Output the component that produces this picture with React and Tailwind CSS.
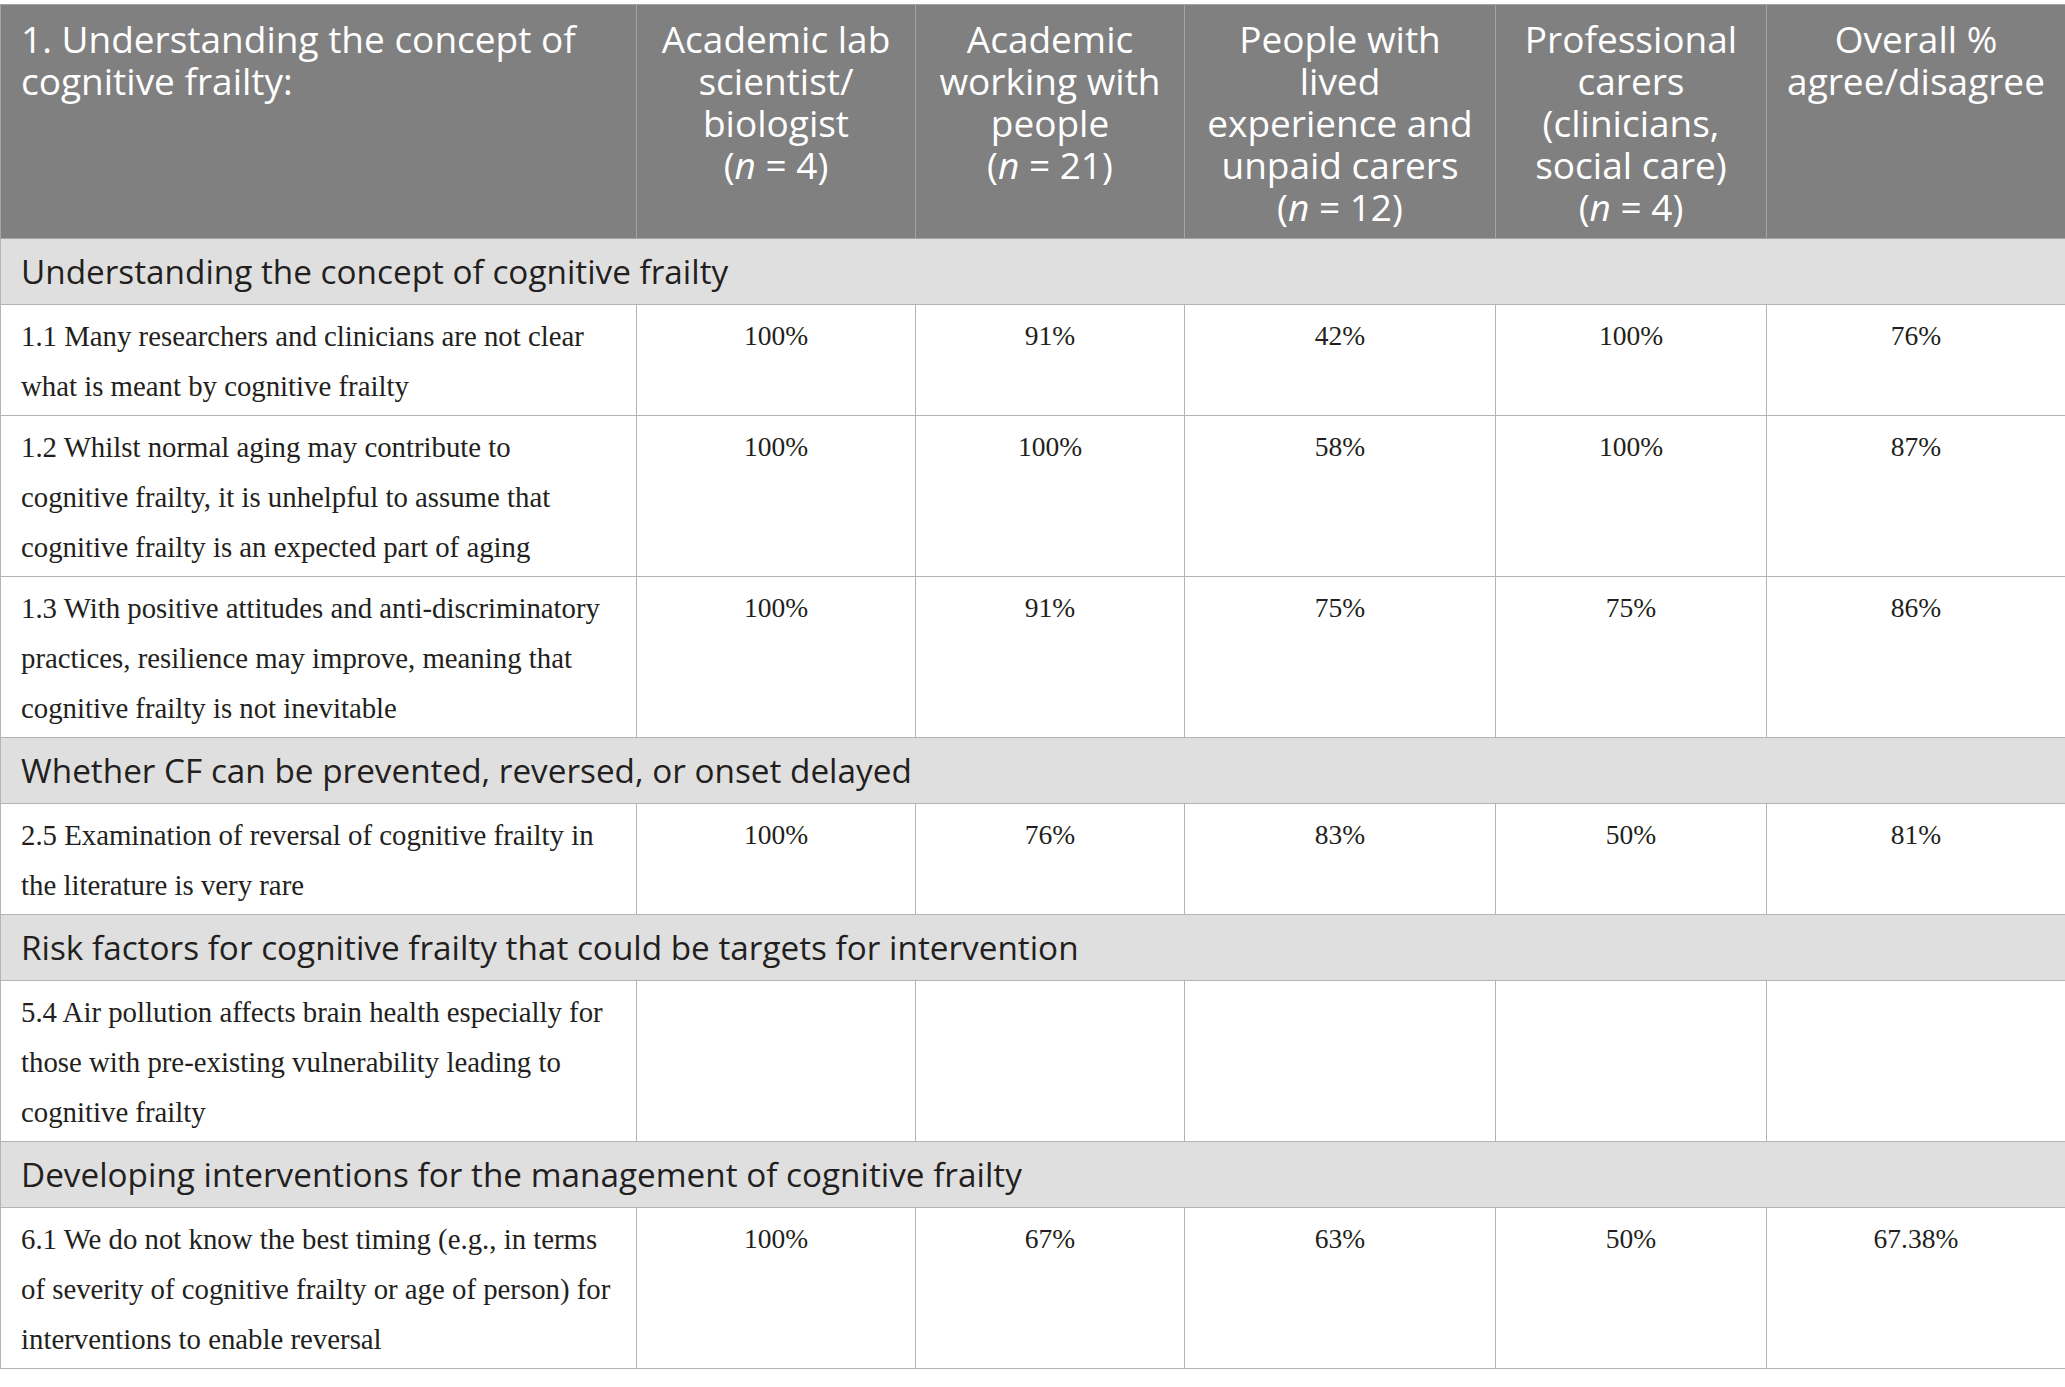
import React from "react";

const groups = [
  {
    title: "Understanding the concept of cognitive frailty",
    rows: [
      {
        text: ["1.1 Many researchers and clinicians are not clear", "what is meant by cognitive frailty"],
        values: ["100%", "91%", "42%", "100%", "76%"],
      },
      {
        text: [
          "1.2 Whilst normal aging may contribute to",
          "cognitive frailty, it is unhelpful to assume that",
          "cognitive frailty is an expected part of aging",
        ],
        values: ["100%", "100%", "58%", "100%", "87%"],
      },
      {
        text: [
          "1.3 With positive attitudes and anti-discriminatory",
          "practices, resilience may improve, meaning that",
          "cognitive frailty is not inevitable",
        ],
        values: ["100%", "91%", "75%", "75%", "86%"],
      },
    ],
  },
  {
    title: "Whether CF can be prevented, reversed, or onset delayed",
    rows: [
      {
        text: ["2.5 Examination of reversal of cognitive frailty in", "the literature is very rare"],
        values: ["100%", "76%", "83%", "50%", "81%"],
      },
    ],
  },
  {
    title: "Risk factors for cognitive frailty that could be targets for intervention",
    rows: [
      {
        text: [
          "5.4 Air pollution affects brain health especially for",
          "those with pre-existing vulnerability leading to",
          "cognitive frailty",
        ],
        values: ["", "", "", "", ""],
      },
    ],
  },
  {
    title: "Developing interventions for the management of cognitive frailty",
    rows: [
      {
        text: [
          "6.1 We do not know the best timing (e.g., in terms",
          "of severity of cognitive frailty or age of person) for",
          "interventions to enable reversal",
        ],
        values: ["100%", "67%", "63%", "50%", "67.38%"],
      },
    ],
  },
];

const headers = [
  ["Academic lab", "scientist/", "biologist", "4"],
  ["Academic", "working with", "people", "21"],
  ["People with", "lived", "experience and", "unpaid carers", "12"],
  ["Professional", "carers", "(clinicians,", "social care)", "4"],
];

const sans = "font-['Open_Sans','Lato',sans-serif]";
const serif = "font-['Liberation_Serif','Times_New_Roman',serif]";

function HeadCell({ lines }) {
  const n = lines[lines.length - 1];
  const words = lines.slice(0, -1);
  return (
    <th className="border border-[#a3a4a3] align-top pt-[13px] pb-[10px] px-1 text-center font-normal whitespace-nowrap">
      {words.map((w, i) => (
        <div key={i}>{w}</div>
      ))}
      <div>
        (<i>n</i> = {n})
      </div>
    </th>
  );
}

export default function App() {
  return (
    <div className="w-[2065px] bg-white pt-[4px]">
      <table className="w-[2065px] table-fixed border-collapse">
        <colgroup>
          <col className="w-[636px]" />
          <col className="w-[279px]" />
          <col className="w-[269px]" />
          <col className="w-[311px]" />
          <col className="w-[271px]" />
          <col className="w-[299px]" />
        </colgroup>
        <thead>
          <tr className={`bg-[#7f807f] text-white text-[37px] leading-[42px] ${sans}`}>
            <th className="border border-[#a3a4a3] align-top pt-[13px] pb-[10px] pl-[20px] pr-2 text-left font-normal whitespace-nowrap">
              <div>1. Understanding the concept of</div>
              <div>cognitive frailty:</div>
            </th>
            {headers.map((h, i) => (
              <HeadCell key={i} lines={h} />
            ))}
            <th className="border border-[#a3a4a3] align-top pt-[13px] pb-[10px] px-1 text-center font-normal whitespace-nowrap">
              <div>Overall %</div>
              <div>agree/disagree</div>
            </th>
          </tr>
        </thead>
        <tbody className="text-[#231f20]">
          {groups.map((g, gi) => (
            <React.Fragment key={gi}>
              <tr className="bg-[#e0dfe0]">
                <td
                  colSpan={6}
                  className={`border border-[#b4b4b4] pl-[20px] py-[12px] text-[33.3px] leading-[41px] whitespace-nowrap ${sans}`}
                >
                  {g.title}
                </td>
              </tr>
              {g.rows.map((r, ri) => (
                <tr key={ri} className={`${serif} leading-[50px]`}>
                  <td className="border border-[#b4b4b4] align-top pt-[6px] pb-[4px] pl-[20px] text-[28.8px] whitespace-nowrap">
                    {r.text.map((t, ti) => (
                      <div key={ti}>{t}</div>
                    ))}
                  </td>
                  {r.values.map((v, vi) => (
                    <td
                      key={vi}
                      className="border border-[#b4b4b4] align-top pt-[6px] pb-[4px] text-center text-[27.5px]"
                    >
                      {v}
                    </td>
                  ))}
                </tr>
              ))}
            </React.Fragment>
          ))}
        </tbody>
      </table>
    </div>
  );
}
